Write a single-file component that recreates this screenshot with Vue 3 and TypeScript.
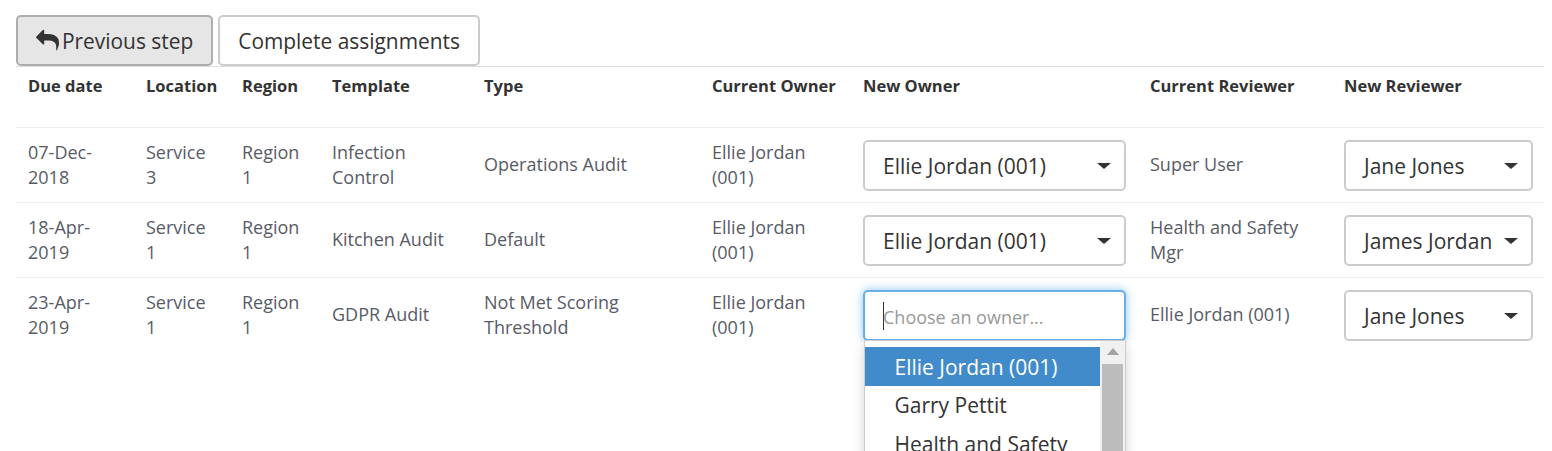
<template>
  <div class="page">
    <div class="actions">
      <button class="btn btnActive" type="button">
        <svg class="replyIcon" viewBox="0 0 1792 1792" aria-hidden="true">
          <path d="M1792 1120q0 166-127 451-3 7-10.500 24t-13.500 30-13 22q-12 17-28 17-15 0-23.500-10t-8.500-25q0-9 2.500-26.500t2.500-23.500q5-68 5-123 0-101-17.500-181t-48.500-138.500-80-101-105.500-69.500-133-42.500-154-21.500-175.500-6h-224v256q0 26-19 45t-45 19-45-19l-512-512q-19-19-19-45t19-45l512-512q19-19 45-19t45 19 19 45v256h224q713 0 875 403 53 134 53 333z" />
        </svg>
        Previous step
      </button>
      <button class="btn" type="button">Complete assignments</button>
    </div>

    <table class="assignments">
      <colgroup>
        <col class="colDue" />
        <col class="colLocation" />
        <col class="colRegion" />
        <col class="colTemplate" />
        <col class="colType" />
        <col class="colOwner" />
        <col class="colNewOwner" />
        <col class="colReviewer" />
        <col class="colNewReviewer" />
      </colgroup>
      <thead>
        <tr>
          <th v-for="heading in headings" :key="heading">{{ heading }}</th>
        </tr>
      </thead>
      <tbody>
        <tr v-for="row in rows" :key="row.due">
          <td>{{ row.due }}</td>
          <td>{{ row.location }}</td>
          <td>{{ row.region }}</td>
          <td>{{ row.template }}</td>
          <td>{{ row.type }}</td>
          <td>{{ row.owner }}</td>
          <td>
            <div v-if="row.open" class="chooser">
              <div class="select selectOpen">
                <span class="caret"></span>
                <span class="placeholder">Choose an owner...</span>
              </div>
              <div class="dropdown">
                <ul class="options">
                  <li
                    v-for="(option, i) in ownerOptions"
                    :key="option"
                    :class="{ highlighted: i === 0 }"
                  >
                    {{ option }}
                  </li>
                </ul>
                <div class="scrollbar">
                  <span class="scrollUp"></span>
                  <span class="scrollThumb"></span>
                </div>
              </div>
            </div>
            <div v-else class="select">
              <span class="selectValue">{{ row.newOwner }}</span>
              <span class="arrow"></span>
            </div>
          </td>
          <td>{{ row.reviewer }}</td>
          <td>
            <div class="select selectReviewer">
              <span class="selectValue">{{ row.newReviewer }}</span>
              <span class="arrow"></span>
            </div>
          </td>
        </tr>
      </tbody>
    </table>
  </div>
</template>

<script setup lang="ts">
interface Assignment {
  due: string
  location: string
  region: string
  template: string
  type: string
  owner: string
  newOwner: string
  reviewer: string
  newReviewer: string
  open?: boolean
}

const headings = [
  'Due date',
  'Location',
  'Region',
  'Template',
  'Type',
  'Current Owner',
  'New Owner',
  'Current Reviewer',
  'New Reviewer',
]

const rows: Assignment[] = [
  {
    due: '07-Dec-2018',
    location: 'Service 3',
    region: 'Region 1',
    template: 'Infection Control',
    type: 'Operations Audit',
    owner: 'Ellie Jordan (001)',
    newOwner: 'Ellie Jordan (001)',
    reviewer: 'Super User',
    newReviewer: 'Jane Jones',
  },
  {
    due: '18-Apr-2019',
    location: 'Service 1',
    region: 'Region 1',
    template: 'Kitchen Audit',
    type: 'Default',
    owner: 'Ellie Jordan (001)',
    newOwner: 'Ellie Jordan (001)',
    reviewer: 'Health and Safety Mgr',
    newReviewer: 'James Jordan',
  },
  {
    due: '23-Apr-2019',
    location: 'Service 1',
    region: 'Region 1',
    template: 'GDPR Audit',
    type: 'Not Met Scoring Threshold',
    owner: 'Ellie Jordan (001)',
    newOwner: '',
    reviewer: 'Ellie Jordan (001)',
    newReviewer: 'Jane Jones',
    open: true,
  },
]

const ownerOptions = ['Ellie Jordan (001)', 'Garry Pettit', 'Health and Safety Mgr', 'James Jordan']
</script>

<style>
html,
body {
  margin: 0;
  height: 451px;
  overflow: hidden;
  background: #fff;
}
</style>

<style scoped>
.page {
  padding: 15px 8px 0 16px;
  font-family: "Open Sans", sans-serif;
  color: #333;
}

/* buttons */
.actions {
  display: flex;
  gap: 5px;
}

.btn {
  box-sizing: border-box;
  height: 51px;
  padding: 0 18px;
  display: flex;
  align-items: center;
  border: 2px solid #ccc;
  border-radius: 5px;
  background: #fff;
  color: #333;
  font-family: inherit;
  font-size: 20.900px;
}

.btnActive {
  background: #e6e6e6;
  border-color: #adadad;
}

.replyIcon {
  width: 23px;
  height: 23px;
  margin-right: 3px;
  fill: #333;
}

/* table */
.assignments {
  width: 1528px;
  table-layout: fixed;
  border-collapse: collapse;
}

.colDue { width: 118px; }
.colLocation { width: 96px; }
.colRegion { width: 90px; }
.colTemplate { width: 152px; }
.colType { width: 228px; }
.colOwner { width: 151px; }
.colNewOwner { width: 287px; }
.colReviewer { width: 194px; }
.colNewReviewer { width: 212px; }

th {
  box-sizing: border-box;
  height: 61px;
  padding: 8px 12px;
  vertical-align: top;
  text-align: left;
  font-size: 16.500px;
  line-height: 22px;
  font-weight: 700;
  color: #333;
  border-top: 1px solid #ddd;
  border-bottom: 1px solid #eee;
}

td {
  box-sizing: border-box;
  height: 75px;
  padding: 11px 12px 12px;
  vertical-align: middle;
  font-size: 18px;
  line-height: 25px;
  color: #585b66;
  border-bottom: 1px solid #eee;
}

tbody tr:last-child td {
  border-bottom: 0;
}

/* selects */
.select {
  box-sizing: border-box;
  position: relative;
  display: flex;
  align-items: center;
  justify-content: space-between;
  width: 263px;
  height: 51px;
  margin-top: 1px;
  margin-bottom: -1px;
  padding: 0 13px 0 18px;
  border: 2px solid #ccc;
  border-radius: 5px;
  background: #fff;
  color: #333;
  font-size: 21px;
}

.selectValue {
  padding-top: 2px;
}

.selectReviewer {
  width: 189px;
}

.selectOpen {
  justify-content: flex-start;
  padding-left: 18px;
  border-color: #66afe9;
  box-shadow: 0 0 10px rgba(102, 175, 233, 0.75);
}

.placeholder {
  padding-top: 3px;
  color: #999;
  font-size: 18px;
}

.caret {
  width: 1px;
  height: 28px;
  margin-right: -1px;
  background: #333;
}

.arrow {
  width: 0;
  height: 0;
  border-left: 7px solid transparent;
  border-right: 7px solid transparent;
  border-top: 6px solid #333;
}

/* open dropdown */
.chooser {
  position: relative;
}

.dropdown {
  position: absolute;
  z-index: 2;
  top: 50px;
  left: 1px;
  display: flex;
  box-sizing: border-box;
  width: 262px;
  height: 220px;
  overflow: hidden;
  border: 1px solid #ccc;
  border-radius: 0 0 4px 4px;
  background: #fff;
  box-shadow: 0 6px 12px rgba(0, 0, 0, 0.18);
}

.options {
  flex: 1;
  min-width: 0;
  margin: 0;
  padding: 6px 0 0;
  list-style: none;
  font-size: 21px;
  color: #333;
}

.options li {
  min-height: 38px;
  padding: 0 16px 0 29.500px;
  line-height: 39px;
}

.options .highlighted {
  height: 39px;
  line-height: 40px;
  background: #428bca;
  color: #fff;
}

.scrollbar {
  display: flex;
  flex-direction: column;
  align-items: center;
  width: 25px;
  background: #f1f1f1;
}

.scrollUp {
  margin: 7px 0 9px;
  width: 0;
  height: 0;
  border-left: 6px solid transparent;
  border-right: 6px solid transparent;
  border-bottom: 7px solid #a3a3a3;
}

.scrollThumb {
  width: 21px;
  flex: 1;
  background: #bcbcbc;
}
</style>
